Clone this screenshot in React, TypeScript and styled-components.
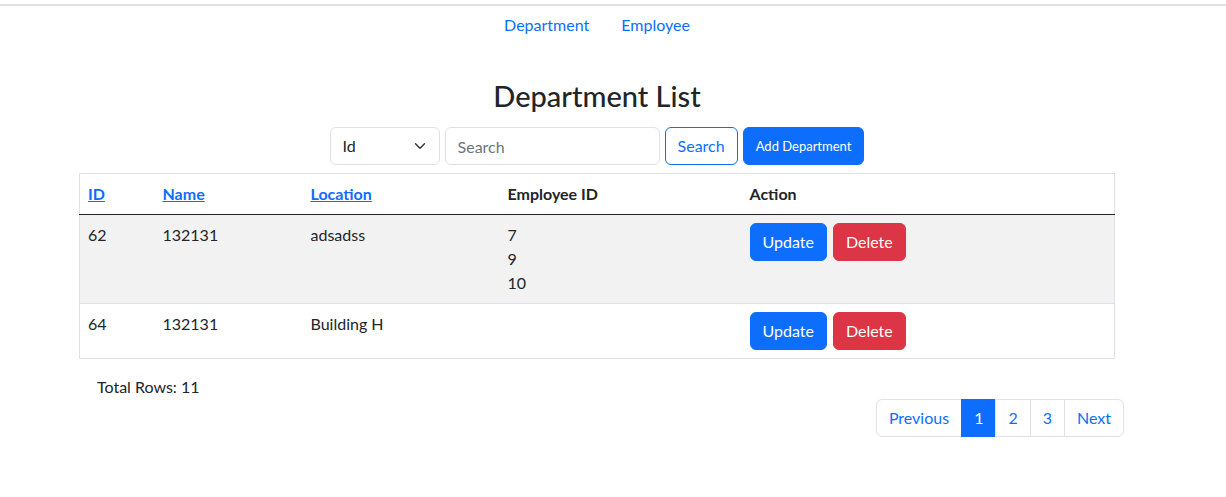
import React from "react";
import styled, { createGlobalStyle } from "styled-components";

const GlobalStyle = createGlobalStyle`
	body {
		margin: 0;
		background: #fff;
		color: #212529;
		font-family: "Segoe UI", Lato, "Liberation Sans", sans-serif;
		font-size: 16px;
		line-height: 1.5;
	}
	* {
		box-sizing: border-box;
	}
`;

const primary = "#0d6efd";
const danger = "#dc3545";
const border = "#dee2e6";

type Row = {
	id: number;
	name: string;
	location: string;
	employees: number[];
};

const rows: Row[] = [
	{ id: 62, name: "132131", location: "adsadss", employees: [7, 9, 10] },
	{ id: 64, name: "132131", location: "Building H", employees: [] },
];

const columns = [
	{ label: "ID", link: true, width: 75 },
	{ label: "Name", link: true, width: 148 },
	{ label: "Location", link: true, width: 197 },
	{ label: "Employee ID", link: false, width: 242 },
	{ label: "Action", link: false, width: 373 },
];

export default function App() {
	return (
		<>
			<GlobalStyle />
			<Header>
				<Nav>
					<NavLink href="#">Department</NavLink>
					<NavLink href="#">Employee</NavLink>
				</Nav>
			</Header>
			<Page>
				<Title>Department List</Title>

				<Toolbar>
					<SelectBox>
						<span>Id</span>
						<svg width="16" height="12" viewBox="0 0 16 16" fill="none">
							<path
								d="m2 5 6 6 6-6"
								stroke="#343a40"
								strokeWidth="2"
								strokeLinecap="round"
								strokeLinejoin="round"
							/>
						</svg>
					</SelectBox>
					<SearchInput placeholder="Search" />
					<Button $variant="outline">Search</Button>
					<Button $variant="primary" $small>
						Add Department
					</Button>
				</Toolbar>

				<Table>
					<colgroup>
						{columns.map((c) => (
							<col key={c.label} style={{ width: c.width }} />
						))}
					</colgroup>
					<thead>
						<tr>
							{columns.map((c) => (
								<Th key={c.label}>
									{c.link ? <HeadLink href="#">{c.label}</HeadLink> : c.label}
								</Th>
							))}
						</tr>
					</thead>
					<tbody>
						{rows.map((r, i) => (
							<Tr key={r.id} $striped={i % 2 === 0}>
								<Td>{r.id}</Td>
								<Td>{r.name}</Td>
								<Td>{r.location}</Td>
								<Td>
									{r.employees.map((e) => (
										<div key={e}>{e}</div>
									))}
								</Td>
								<Td>
									<Actions>
										<Button $variant="primary">Update</Button>
										<Button $variant="danger">Delete</Button>
									</Actions>
								</Td>
							</Tr>
						))}
					</tbody>
				</Table>

				<Footer>
					<Total>Total Rows: 11</Total>
					<Pagination>
						<PageItem href="#">Previous</PageItem>
						<PageItem href="#" $active>
							1
						</PageItem>
						<PageItem href="#">2</PageItem>
						<PageItem href="#">3</PageItem>
						<PageItem href="#">Next</PageItem>
					</Pagination>
				</Footer>
			</Page>
		</>
	);
}

const Header = styled.header`
	margin-top: 4px;
	border-top: 2px solid #e0e0e0;
`;

const Nav = styled.nav`
	width: 1194px;
	display: flex;
	justify-content: center;
`;

const NavLink = styled.a`
	color: ${primary};
	text-decoration: none;
	padding: 7px 16px;
	line-height: 24px;
`;

const Page = styled.div`
	width: 1194px;
`;

const Title = styled.h2`
	margin: 34px 0 14px;
	text-align: center;
	font-size: 29px;
	font-weight: 500;
	line-height: 35px;
`;

const Toolbar = styled.div`
	display: flex;
	justify-content: center;
	gap: 5px;
	height: 38px;
`;

const SelectBox = styled.div`
	width: 110px;
	height: 38px;
	display: flex;
	align-items: center;
	justify-content: space-between;
	padding: 0 11px 0 12px;
	border: 1px solid ${border};
	border-radius: 6px;
	color: #212529;
`;

const SearchInput = styled.input`
	width: 215px;
	height: 38px;
	padding: 6px 12px;
	border: 1px solid ${border};
	border-radius: 6px;
	font: inherit;
	color: #212529;
	outline: none;
	&::placeholder {
		color: #6c757d;
	}
`;

const Button = styled.button<{
	$variant: "primary" | "outline" | "danger";
	$small?: boolean;
}>`
	height: 38px;
	padding: 6px 12px;
	border-radius: 6px;
	font-family: inherit;
	font-size: ${(p) => (p.$small ? "13px" : "16px")};
	line-height: 24px;
	cursor: pointer;
	border: 1px solid
		${(p) => (p.$variant === "danger" ? danger : primary)};
	background: ${(p) =>
		p.$variant === "outline" ? "#fff" : p.$variant === "danger" ? danger : primary};
	color: ${(p) => (p.$variant === "outline" ? primary : "#fff")};
`;

const Table = styled.table`
	width: 1035px;
	margin: 8px 0 0 79px;
	border-collapse: collapse;
	table-layout: fixed;
	border: 1px solid ${border};
`;

const Th = styled.th`
	text-align: left;
	padding: 8px;
	font-weight: 700;
	line-height: 24px;
	border-bottom: 1px solid #212529;
`;

const HeadLink = styled.a`
	color: ${primary};
	text-decoration: underline;
`;

const Tr = styled.tr<{ $striped: boolean }>`
	background: ${(p) => (p.$striped ? "#f2f2f2" : "#fff")};
	border-bottom: 1px solid ${border};
`;

const Td = styled.td`
	padding: 8px;
	vertical-align: top;
	line-height: 24px;
`;

const Actions = styled.div`
	display: flex;
	gap: 6px;
`;

const Footer = styled.div`
	margin-top: 16px;
	padding: 0 70px 0 97px;
	display: flex;
	flex-direction: column;
`;

const Total = styled.div`
	line-height: 24px;
`;

const Pagination = styled.div`
	display: flex;
	align-self: flex-end;
`;

const PageItem = styled.a<{ $active?: boolean }>`
	padding: 6px 12px;
	line-height: 24px;
	text-decoration: none;
	border: 1px solid ${(p) => (p.$active ? primary : border)};
	margin-left: -1px;
	background: ${(p) => (p.$active ? primary : "#fff")};
	color: ${(p) => (p.$active ? "#fff" : primary)};
	&:first-child {
		margin-left: 0;
		border-radius: 6px 0 0 6px;
	}
	&:last-child {
		border-radius: 0 6px 6px 0;
	}
`;
